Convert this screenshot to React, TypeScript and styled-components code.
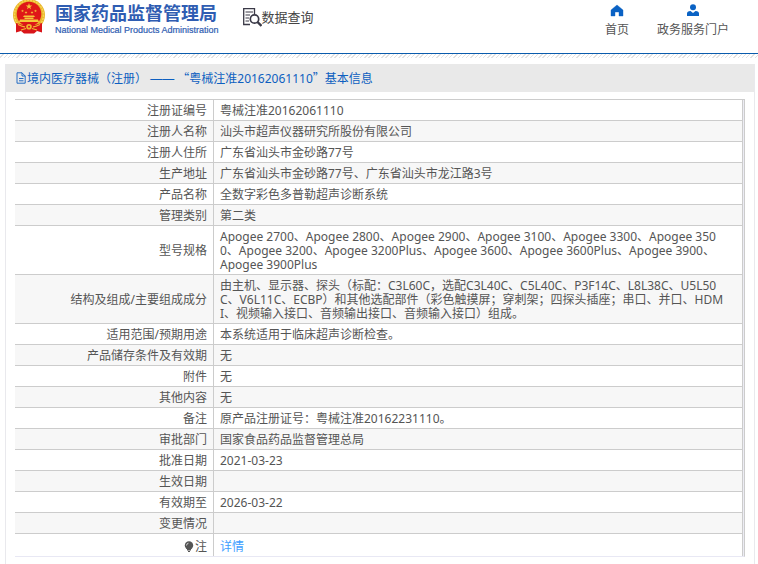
import React from 'react';
import styled, { createGlobalStyle } from 'styled-components';

const GlobalStyle = createGlobalStyle`
  *, *::before, *::after { box-sizing: border-box; }
  body {
    margin: 0;
    background: #fff;
    color: #555;
    font: 12px/14px "Noto Sans", "Noto Sans CJK SC", sans-serif;
  }
`;

const Page = styled.div`
  display: flex;
  flex-direction: column;
  min-height: 100vh;
`;

const Header = styled.header`
  display: flex;
  align-items: flex-start;
  height: 54px;
  padding: 0 29px 0 12px;
  border-bottom: 1px solid #0a5cad;
`;

const Hatch = styled.div`
  height: 4px;
  background: repeating-linear-gradient(135deg, #fff 0 2px, #e2e2e2 2px 3px);
`;

const Brand = styled.a`
  display: flex;
  gap: 9px;
  color: #2f5db2;
  text-decoration: none;
`;

const BrandText = styled.span`
  display: flex;
  flex-direction: column;
  white-space: nowrap;
`;

const BrandName = styled.span`
  font: bold 18px/24px "Noto Sans CJK SC", sans-serif;
`;

const BrandLatin = styled.span`
  font: 9px/12px "Liberation Sans", sans-serif;
  -webkit-text-stroke: 0.2px #2f5db2;
`;

const Section = styled.h1`
  display: flex;
  align-items: center;
  margin: 7px 0 0 23px;
  color: #444;
  font: 13px/20px "Noto Sans CJK SC", sans-serif;
  white-space: nowrap;
`;

const Nav = styled.nav`
  display: flex;
  gap: 28px;
  margin-left: auto;
`;

const NavLink = styled.a`
  display: flex;
  flex-direction: column;
  align-items: center;
  gap: 6px;
  padding-top: 4px;
  color: #555;
  text-decoration: none;
  white-space: nowrap;
`;

const Panel = styled.main`
  flex: 1;
  margin: 6px 3px 0 5px;
  border: 1px solid #e9e9ed;
  border-width: 0 1px;
`;

const PanelTitle = styled.h2`
  display: flex;
  align-items: center;
  gap: 1px;
  height: 28px;
  margin: 0 0 7px;
  padding-left: 10px;
  background: #e9e9e9;
  color: #0d5fc0;
  font-size: 12px;
  font-weight: normal;
  white-space: pre;
`;

const Quote = styled.span`
  font-family: "Noto Sans CJK SC", sans-serif;
`;

const Dash = styled.span`
  font-family: "Liberation Sans", sans-serif;
`;

const Frame = styled.div`
  margin: 0 9px;
  padding-right: 1px;
  border: 1px solid #ccc;
  border-bottom-color: #e8e8f4;
  border-left: 0;
  background: #ececf4;
`;

const Table = styled.table`
  width: 100%;
  border-collapse: separate;
  border-spacing: 0;
  table-layout: fixed;
  background: #fff;
`;

const Label = styled.th`
  width: 199px;
  padding: 4px 6px 2px;
  border-right: 1px solid #ccc;
  border-bottom: 1px solid #ccc;
  font-weight: normal;
  text-align: right;
`;

const Value = styled.td`
  height: 21px;
  padding: 4px 6px 2px;
  border-right: 1px solid #ccc;
  border-bottom: 1px solid #ccc;
  white-space: pre-line;
  word-break: break-all;
`;

const Row = styled.tr`
  &:nth-child(even) { background: #f7f7f7; }
  &:last-child > * { border-bottom: 0; padding-top: 6px; }
`;

const NoteLabel = styled.span`
  display: flex;
  align-items: center;
  justify-content: flex-end;
  gap: 1px;
`;

const DetailLink = styled.a`
  color: #409eff;
  text-decoration: none;
`;

const star = (cx: number, cy: number, r: number) =>
  Array.from({ length: 10 }, (_, i) => {
    const d = i % 2 ? r * 0.4 : r;
    const a = (Math.PI * i) / 5 - Math.PI / 2;
    return `${cx + d * Math.cos(a)},${cy + d * Math.sin(a)}`;
  }).join(' ');

const Emblem = () => (
  <svg width="34" height="34" viewBox="0 0 34 34" aria-hidden="true">
    <circle cx="17" cy="15" r="16" fill="#e9b52d" />
    <circle cx="17" cy="15" r="14.500" fill="none" stroke="#f6d552" strokeWidth="1.500" strokeDasharray="2 1" />
    <circle cx="17" cy="14" r="12.300" fill="#df1718" />
    <g fill="#f5c83a">
      <polygon points={star(17, 6.5, 3.4)} />
      <polygon points={star(10.5, 11, 1.5)} />
      <polygon points={star(14, 12.5, 1.5)} />
      <polygon points={star(20, 12.5, 1.5)} />
      <polygon points={star(23.5, 11, 1.5)} />
      <path d="M12 15.500h10l1 1.500H11zM12.500 17.500h9V19h-9zM8 19.500h18l1 2.500H7z" />
    </g>
    <path d="M4 23l7 2q6-5 12 0l7-2v9.500l-5-1.500-3 2.500H12L9 31l-5 1.500z" fill="#d9151a" />
    <path d="M6 24.500q5 2.500 7 2.300m15-2.300q-5 2.500-7 2.300M9 30l5-1.500m11 1.500l-5-1.500" fill="none" stroke="#f3bd32" strokeWidth="1.200" />
    <circle cx="17" cy="26.800" r="2.800" fill="#f0b52c" />
    <circle cx="17" cy="26.800" r="1" fill="#d9151a" />
  </svg>
);

const SearchDoc = () => (
  <svg width="20" height="20" viewBox="0 0 20 20" fill="none" stroke="#3a3947" aria-hidden="true">
    <path d="M12.500 7V1.700H1.700V17.500H8" strokeWidth="1.300" />
    <path d="M3.500 5h7.500M3.500 8h4.500M3.500 11h3.500M3.500 14h3.500" strokeWidth="1" />
    <circle cx="12.500" cy="12" r="4.200" strokeWidth="1.700" />
    <path d="M15.500 15l4 4" strokeWidth="2.400" />
  </svg>
);

const HomeIcon = () => (
  <svg width="14" height="13" viewBox="0 0 14 13" aria-hidden="true">
    <path d="M7 1L1 6v6h4V8h4v4h4V6z" fill="#0a62c4" stroke="#0a62c4" strokeWidth=".4" strokeLinejoin="round" />
  </svg>
);

const UserIcon = () => (
  <svg width="14" height="13" viewBox="0 0 14 13" aria-hidden="true">
    <circle cx="7" cy="3.200" r="3" fill="#0a62c4" />
    <path d="M1 12V9.500Q1 7.300 4.500 7L7 9L9.500 7Q13 7.300 13 9.500V12z" fill="#0a62c4" />
  </svg>
);

const DocIcon = () => (
  <svg width="10" height="12" viewBox="0 0 10 12" fill="none" stroke="#0d5fc0" aria-hidden="true">
    <path d="M1 .8H6L9.200 4V11.200H1zM6 .8V4H9.200M3 6.500H7.500M3 8.800H7.500" strokeWidth=".9" />
  </svg>
);

const BulbIcon = () => (
  <svg width="10" height="12" viewBox="0 0 10 12" aria-hidden="true">
    <circle cx="5" cy="4.500" r="4.200" fill="#555" />
    <path d="M3 8h4v1.500H3zM4 10h2v1H4z" fill="#555" />
    <path d="M2.500 4.500Q2.500 2.500 4.500 2.200" fill="none" stroke="#fff" strokeWidth=".7" />
  </svg>
);

const rows: [string, string][] = [
  ['注册证编号', '粤械注准20162061110'],
  ['注册人名称', '汕头市超声仪器研究所股份有限公司'],
  ['注册人住所', '广东省汕头市金砂路77号'],
  ['生产地址', '广东省汕头市金砂路77号、广东省汕头市龙江路3号'],
  ['产品名称', '全数字彩色多普勒超声诊断系统'],
  ['管理类别', '第二类'],
  ['型号规格', 'Apogee 2700、Apogee 2800、Apogee 2900、Apogee 3100、Apogee 3300、Apogee 350\n0、Apogee 3200、Apogee 3200Plus、Apogee 3600、Apogee 3600Plus、Apogee 3900、\nApogee 3900Plus'],
  ['结构及组成/主要组成成分', '由主机、显示器、探头（标配：C3L60C，选配C3L40C、C5L40C、P3F14C、L8L38C、U5L50\nC、V6L11C、ECBP）和其他选配部件（彩色触摸屏；穿刺架；四探头插座；串口、并口、HDM\nI、视频输入接口、音频输出接口、音频输入接口）组成。'],
  ['适用范围/预期用途', '本系统适用于临床超声诊断检查。'],
  ['产品储存条件及有效期', '无'],
  ['附件', '无'],
  ['其他内容', '无'],
  ['备注', '原产品注册证号：粤械注准20162231110。'],
  ['审批部门', '国家食品药品监督管理总局'],
  ['批准日期', '2021-03-23'],
  ['生效日期', ''],
  ['有效期至', '2026-03-22'],
  ['变更情况', ''],
];

export default function App() {
  return (
    <Page>
      <GlobalStyle />
      <Header>
        <Brand href="#">
          <Emblem />
          <BrandText>
            <BrandName>国家药品监督管理局</BrandName>
            <BrandLatin>National Medical Products Administration</BrandLatin>
          </BrandText>
        </Brand>
        <Section><SearchDoc />数据查询</Section>
        <Nav>
          <NavLink href="#"><HomeIcon />首页</NavLink>
          <NavLink href="#"><UserIcon />政务服务门户</NavLink>
        </Nav>
      </Header>
      <Hatch />
      <Panel>
        <PanelTitle>
          <DocIcon />
          <span>境内医疗器械（注册） <Dash>——</Dash> <Quote>“</Quote>粤械注准20162061110<Quote>”</Quote>基本信息</span>
        </PanelTitle>
        <Frame>
          <Table>
            <tbody>
              {rows.map(([label, value]) => (
                <Row key={label}>
                  <Label scope="row">{label}</Label>
                  <Value>{value}</Value>
                </Row>
              ))}
              <Row>
                <Label scope="row"><NoteLabel><BulbIcon />注</NoteLabel></Label>
                <Value><DetailLink href="#">详情</DetailLink></Value>
              </Row>
            </tbody>
          </Table>
        </Frame>
      </Panel>
    </Page>
  );
}
